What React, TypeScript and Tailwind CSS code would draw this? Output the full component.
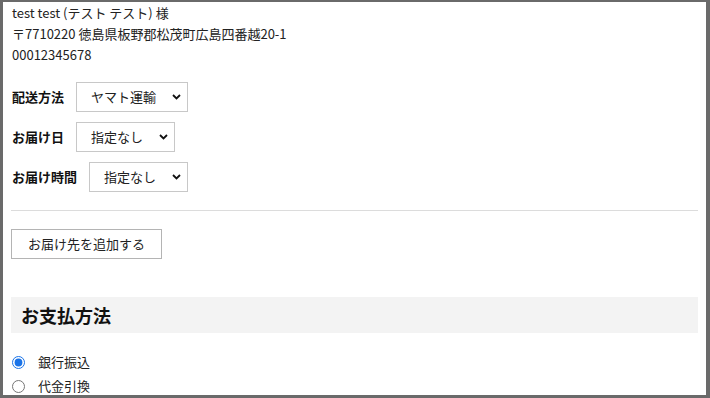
import React from 'react';

const font = { fontFamily: '"Noto Sans CJK JP", "Noto Sans", sans-serif' };

const Chevron: React.FC = () => (
  <svg width="9" height="6" viewBox="0 0 9 6" className="shrink-0">
    <path d="M1 1l3.5 3.5L8 1" fill="none" stroke="#111" strokeWidth="1.8" />
  </svg>
);

interface SelectRowProps {
  label: string;
  value: string;
  width: string;
}

const SelectRow: React.FC<SelectRowProps> = ({ label, value, width }) => (
  <div className="flex items-center gap-3">
    <span className="text-[13px] font-bold text-[#111] pl-px">{label}</span>
    <div className={`${width} h-[30px] border border-[#c8c8c8] flex items-center justify-between pl-[14px] pr-[6px] bg-white`}>
      <span className="text-[13px] text-[#222]">{value}</span>
      <Chevron />
    </div>
  </div>
);

const App: React.FC = () => {
  return (
    <div
      className="w-[710px] h-[398px] bg-white border-l-[3px] border-t-2 border-r-4 border-b-[3px] border-[#6a6a6a] overflow-hidden text-[#222]"
      style={font}
    >
      <div className="px-2">
        <div className="text-[13px] leading-[21px] pl-px">
          <p>test test (テスト テスト) 様</p>
          <p>〒7710220 徳島県板野郡松茂町広島四番越20-1</p>
          <p>00012345678</p>
        </div>

        <div className="mt-[17px] flex flex-col gap-[10px]">
          <SelectRow label="配送方法" value="ヤマト運輸" width="w-[112px]" />
          <SelectRow label="お届け日" value="指定なし" width="w-[99px]" />
          <SelectRow label="お届け時間" value="指定なし" width="w-[99px]" />
        </div>

        <div className="mt-[18px] border-t border-[#dcdcdc]" />

        <button className="mt-[18px] w-[151px] h-[30px] border border-[#b4b4b4] bg-white text-[13px] text-[#222] flex items-center justify-center">
          お届け先を追加する
        </button>

        <div className="mt-[38px] h-[36px] bg-[#f3f3f3] flex items-center pl-[10px]">
          <h2 className="text-[18px] font-bold text-[#111]">お支払方法</h2>
        </div>

        <div className="mt-[17px] text-[13px]">
          <label className="h-6 flex items-center gap-[13px] pl-px">
            <input type="radio" name="pay" defaultChecked className="w-[13px] h-[13px] m-0 accent-[#1a73e8]" />
            <span>銀行振込</span>
          </label>
          <label className="h-6 flex items-center gap-[13px] pl-px">
            <input type="radio" name="pay" className="w-[13px] h-[13px] m-0" />
            <span>代金引換</span>
          </label>
        </div>
      </div>
    </div>
  );
};

export default App;
